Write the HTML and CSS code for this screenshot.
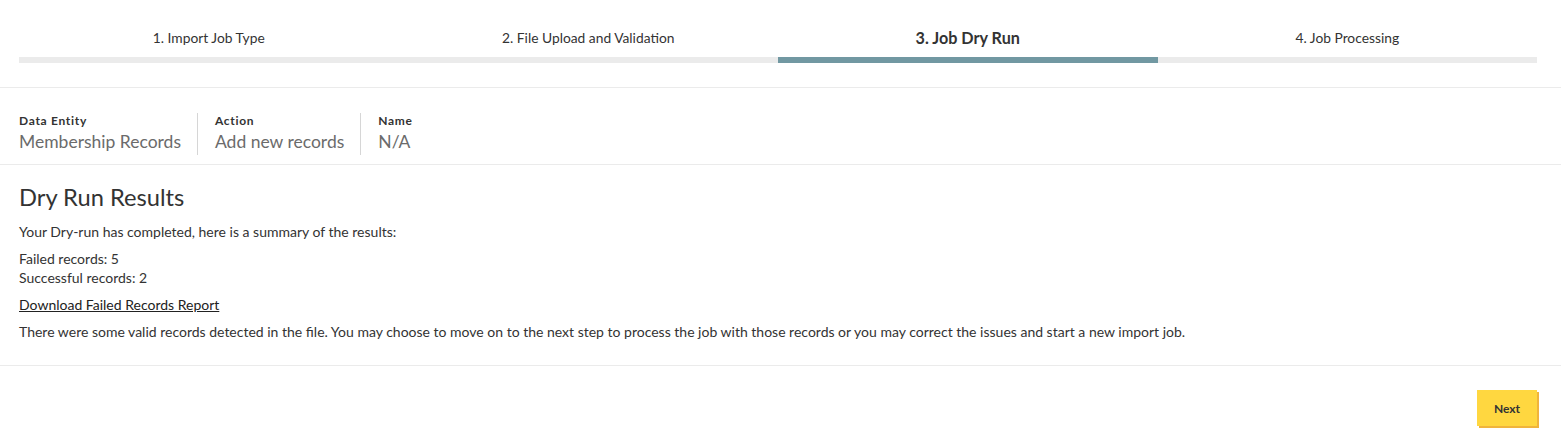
FILE: index.html
```html
<!DOCTYPE html>
<html lang="en">
<head>
  <meta charset="UTF-8">
  <title>Import Job - Dry Run</title>
  <link rel="stylesheet" href="styles.css">
</head>
<body>
  <!-- Steps -->
  <div class="steps">
    <div class="step">
      <span class="step-label">1. Import Job Type</span>
      <div class="step-bar"></div>
    </div>
    <div class="step">
      <span class="step-label">2. File Upload and Validation</span>
      <div class="step-bar"></div>
    </div>
    <div class="step active">
      <span class="step-label">3. Job Dry Run</span>
      <div class="step-bar"></div>
    </div>
    <div class="step">
      <span class="step-label">4. Job Processing</span>
      <div class="step-bar"></div>
    </div>
  </div>

  <!-- Job summary -->
  <div class="job-meta">
    <div class="meta-item">
      <div class="meta-label">Data Entity</div>
      <div class="meta-value">Membership Records</div>
    </div>
    <div class="meta-item">
      <div class="meta-label">Action</div>
      <div class="meta-value">Add new records</div>
    </div>
    <div class="meta-item">
      <div class="meta-label">Name</div>
      <div class="meta-value">N/A</div>
    </div>
  </div>

  <!-- Results -->
  <div class="results">
    <h1>Dry Run Results</h1>
    <p>Your Dry-run has completed, here is a summary of the results:</p>
    <p>Failed records: 5<br>Successful records: 2</p>
    <p><a href="#">Download Failed Records Report</a></p>
    <p>There were some valid records detected in the file. You may choose to move on to the next step to process the job with those records or you may correct the issues and start a new import job.</p>
  </div>

  <div class="footer">
    <button type="button">Next</button>
  </div>
</body>
</html>
```

FILE: styles.css
```css
body {
  margin: 0;
  font-family: Lato, "Open Sans", sans-serif;
  color: #333333;
  background: #FFFFFF;
}

/* Steps */
.steps {
  display: flex;
  padding: 29px 24px 24px 19px;
  border-bottom: 1px solid #EBEBEB;
}

.step {
  flex: 1;
  display: flex;
  flex-direction: column;
  align-items: center;
}

.step-label {
  font-size: 13.8px;
  line-height: 17px;
  color: #333333;
}

.step-bar {
  align-self: stretch;
  height: 6px;
  margin-top: 11px;
  background-color: #EBEBEB;
}

.step.active .step-label {
  font-size: 16.2px;
  font-weight: 700;
  line-height: 17px;
}

.step.active .step-bar {
  background-color: #7198A2;
}

/* Job meta */
.job-meta {
  display: flex;
  padding: 25px 19px 9px;
  border-bottom: 1px solid #EBEBEB;
}

.meta-item {
  padding: 1px 16px 1px 17px;
  border-left: 1px solid #D6D6D6;
}

.meta-item:first-child {
  padding-left: 0;
  border-left: none;
}

.meta-label {
  font-size: 12px;
  font-weight: 700;
  letter-spacing: 0.7px;
  line-height: 14px;
  color: #333333;
}

.meta-value {
  font-size: 17.5px;
  line-height: 24px;
  margin-top: 2px;
  color: #6B6B6B;
}

/* Results */
.results {
  padding: 18px 19px 24px;
  border-bottom: 1px solid #EBEBEB;
}

.results h1 {
  margin: 0 0 11px;
  font-size: 23.7px;
  font-weight: 400;
  line-height: 28px;
  color: #333333;
}

.results p {
  margin: 0 0 8px;
  font-size: 14px;
  line-height: 19px;
  color: #333333;
}

.results p:last-child {
  margin-bottom: 0;
}

.results a {
  color: #222222;
  text-decoration: underline;
}

/* Footer */
.footer {
  display: flex;
  justify-content: flex-end;
  padding: 24px 24px;
}

.footer button {
  width: 60px;
  height: 36px;
  font-family: inherit;
  font-size: 12px;
  font-weight: 700;
  color: #333333;
  background-color: #FFD740;
  border: none;
  border-radius: 0;
  box-shadow: 2px 2px 0 #F0B43C;
  cursor: pointer;
}
```
